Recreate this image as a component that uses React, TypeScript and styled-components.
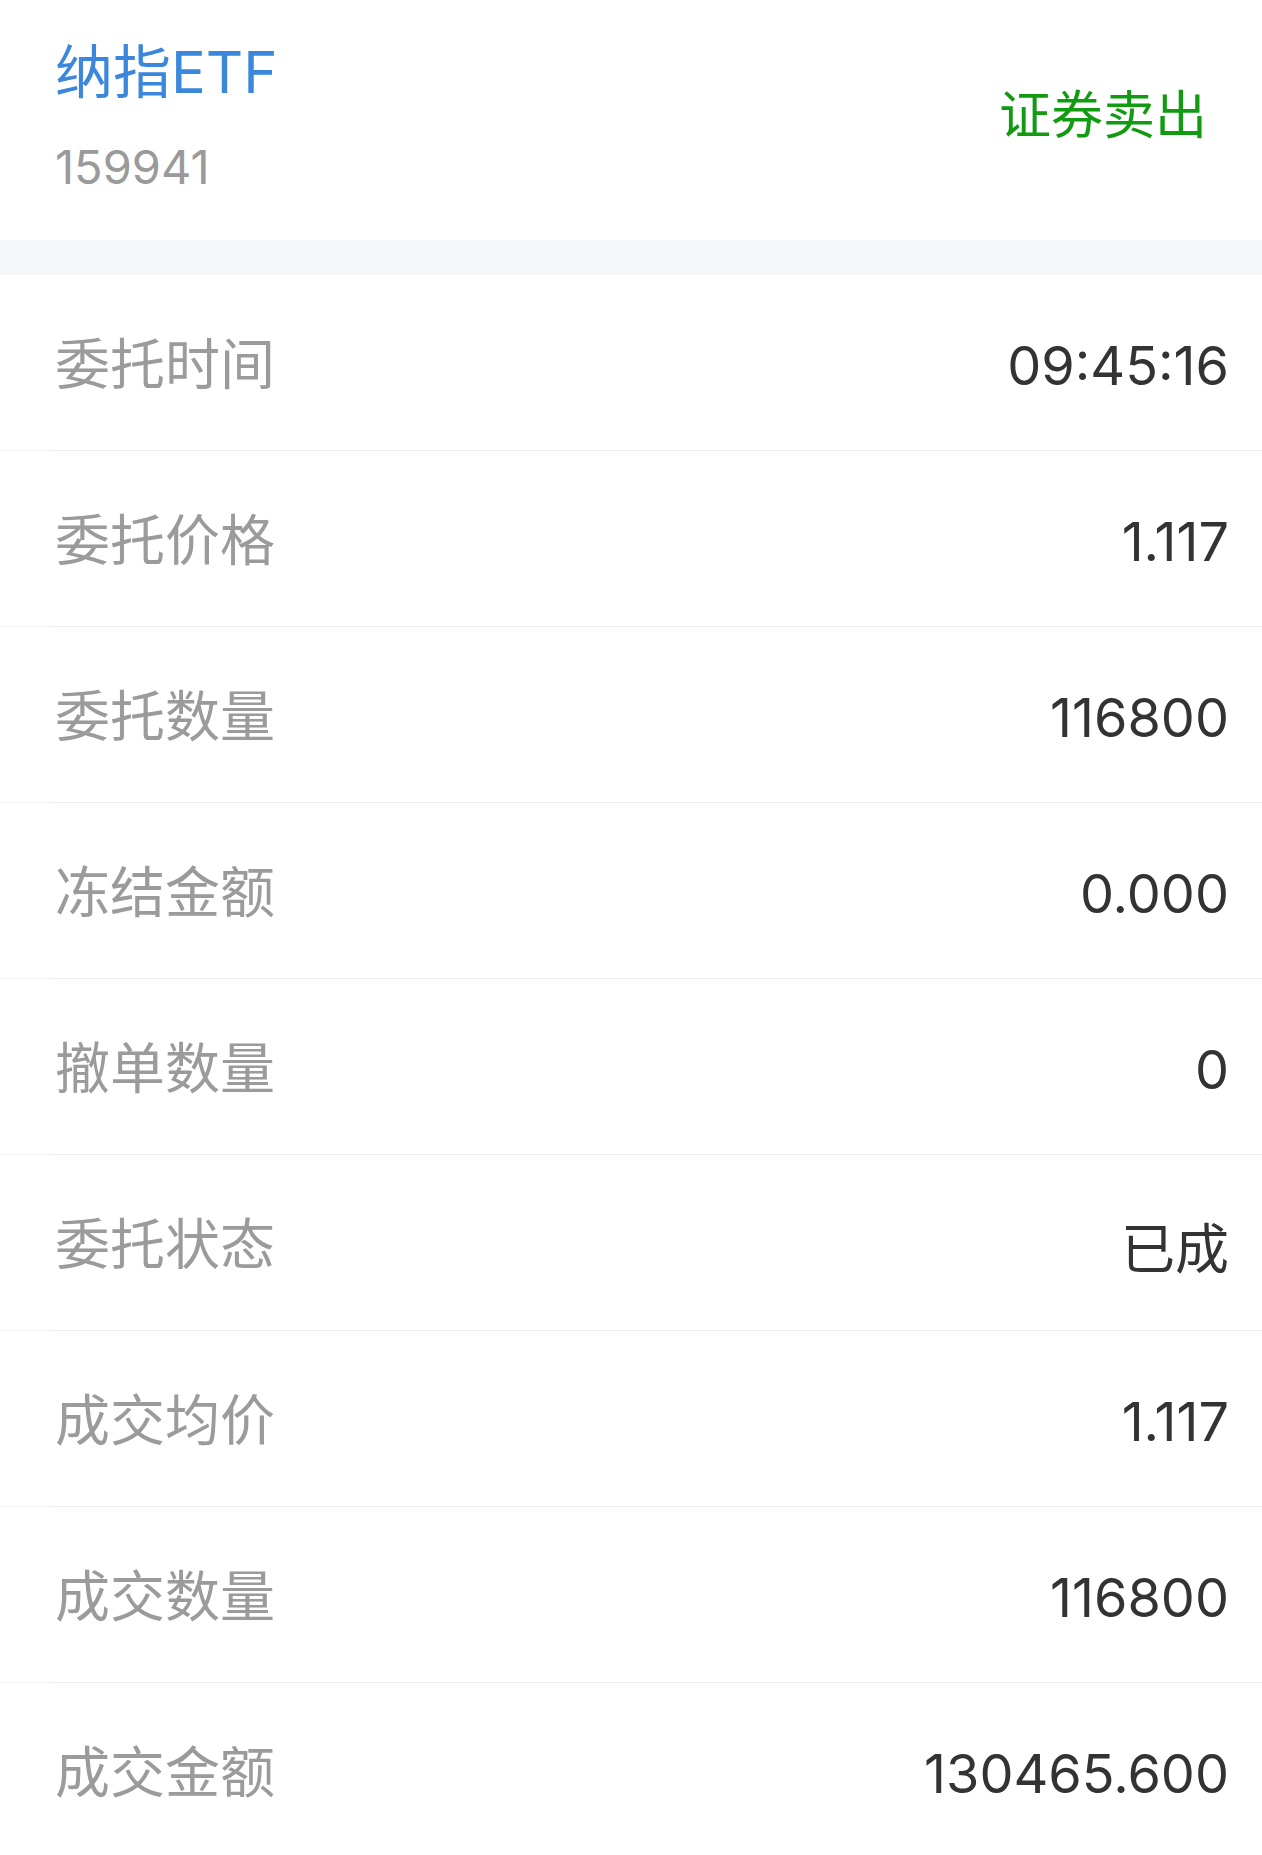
import React from "react";
import styled, { createGlobalStyle } from "styled-components";

const GlobalStyle = createGlobalStyle`
    html, body {
        margin: 0;
        padding: 0;
        background: #ffffff;
    }

    body {
        font-family: Inter, "Noto Sans CJK SC", sans-serif;
        -webkit-font-smoothing: antialiased;
    }
`

const Page = styled.main`
    width: 1262px;
    background: #ffffff;
`

const Header = styled.header`
    display: flex;
    justify-content: space-between;
    align-items: center;
    height: 240px;
    padding: 0 55px 0 55px;
    box-sizing: border-box;
`

const Stock = styled.div`
    display: flex;
    flex-direction: column;
    gap: 42px;
    margin-top: -6px;
`

const StockName = styled.h1`
    margin: 0;
    font-size: 58px;
    font-weight: 400;
    line-height: 58px;
    color: #3a87dc;
`

const StockCode = styled.span`
    font-size: 47px;
    line-height: 48px;
    color: #9a9a9a;
`

const Direction = styled.span<{ sell: boolean }>`
    font-family: "Noto Sans CJK SC", sans-serif;
    font-size: 52px;
    line-height: 52px;
    color: ${props => props.sell ? "#109b10" : "#e63b3b"};
    margin-top: -16px;
`

const Band = styled.div`
    height: 35px;
    background: #f5f6f8;
`

const Item = styled.div`
    display: flex;
    height: 176px;
`

const Indent = styled.span`
    width: 53px;
    flex-shrink: 0;
    border-bottom: 1px solid #f5f5f5;
`

const Row = styled.div`
    flex: 1;
    display: flex;
    justify-content: space-between;
    align-items: center;
    padding: 0 33px 0 2px;
    border-bottom: 1px solid #ebebeb;
`

const Label = styled.span`
    font-family: "Noto Sans CJK SC", sans-serif;
    font-size: 55px;
    color: #9b9b9b;
    margin-top: -6px;
`

const Value = styled.span`
    font-size: 54px;
    color: #333333;
    margin-top: 6px;
`

const details: [string, string][] = [
    ["委托时间", "09:45:16"],
    ["委托价格", "1.117"],
    ["委托数量", "116800"],
    ["冻结金额", "0.000"],
    ["撤单数量", "0"],
    ["委托状态", "已成"],
    ["成交均价", "1.117"],
    ["成交数量", "116800"],
    ["成交金额", "130465.600"],
];

export default function App() {
    return (
        <Page>
            <GlobalStyle />
            <Header>
                <Stock>
                    <StockName>纳指ETF</StockName>
                    <StockCode>159941</StockCode>
                </Stock>
                <Direction sell>证券卖出</Direction>
            </Header>
            <Band />
            {details.map(([label, value]) => (
                <Item key={label}>
                    <Indent />
                    <Row>
                        <Label>{label}</Label>
                        <Value>{value}</Value>
                    </Row>
                </Item>
            ))}
        </Page>
    );
}
